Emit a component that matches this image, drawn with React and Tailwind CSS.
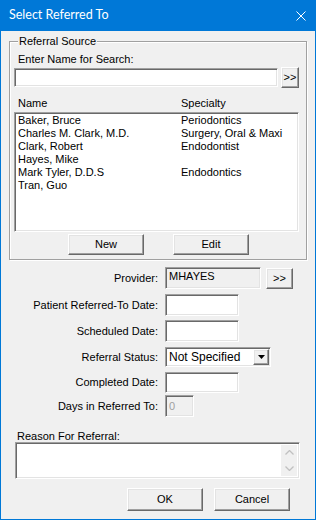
export default function App() {
  const raised =
    "bg-[#f0f0f0] border border-t-white border-l-white border-r-[#696969] border-b-[#696969] shadow-[inset_-1px_-1px_0_#a0a0a0,inset_1px_1px_0_#e3e3e3]";
  const sunken =
    "border border-t-[#a0a0a0] border-l-[#a0a0a0] border-r-white border-b-white shadow-[inset_1px_1px_0_#696969,inset_-1px_-1px_0_#e3e3e3]";
  const items = [
    ["Baker, Bruce", "Periodontics"],
    ["Charles M. Clark, M.D.", "Surgery, Oral & Maxi"],
    ["Clark, Robert", "Endodontist"],
    ["Hayes, Mike", ""],
    ["Mark Tyler, D.D.S", "Endodontics"],
    ["Tran, Guo", ""],
  ];
  const label = "w-[149px] text-right leading-[13px] shrink-0";
  return (
    <div className="w-[316px] h-[520px] bg-[#0078d7] px-[1px] pb-[1px] flex flex-col font-['Liberation_Sans',Arial,sans-serif] text-[11px] text-black">
      <div className="h-[31px] shrink-0 flex items-center justify-between pl-[8px] pr-[9px]">
        <span className="text-white text-[12.5px] font-['Lato',sans-serif] leading-none">Select Referred To</span>
        <svg width="10" height="10" viewBox="0 0 10 10" className="block">
          <path d="M0.5 0.5 L9.5 9.5 M9.5 0.5 L0.5 9.5" stroke="white" strokeWidth="1" />
        </svg>
      </div>
      <div className="flex-1 bg-[#f0f0f0] px-[8px] pt-[10px] pb-[8px] flex flex-col">
        {/* Group box */}
        <div className="relative h-[219px] border border-[#a0a0a0] shadow-[inset_1px_1px_0_#fff,1px_1px_0_#fff] pl-[4px] pr-[5px] pt-[11px] flex flex-col">
          <span className="absolute left-[8px] -top-[7px] px-[1px] bg-[#f0f0f0] leading-[13px]">Referral Source</span>
          <div className="leading-[13px] pl-[4px]">Enter Name for Search:</div>
          <div className="mt-[1px] h-[21px] flex items-center">
            <div className={`w-[264px] h-[19px] bg-white ${sunken}`}></div>
            <button className={`ml-[3px] w-[18px] h-[21px] flex items-center justify-center leading-none text-[11px] ${raised}`}>&gt;&gt;</button>
          </div>
          <div className="mt-[9px] h-[13px] leading-[13px] flex pl-[4px]">
            <span className="w-[163px]">Name</span>
            <span>Specialty</span>
          </div>
          <div className={`mt-[2px] h-[120px] w-[285px] bg-white ${sunken} pl-[3px] pt-[1px]`}>
            {items.map(([n, s]) => (
              <div key={n} className="flex h-[13px] leading-[13px]">
                <span className="w-[163px]">{n}</span>
                <span>{s}</span>
              </div>
            ))}
          </div>
          <div className="mt-[2px] flex pl-[54px] gap-[29px]">
            <button className={`w-[76px] h-[21px] flex items-center justify-center ${raised}`}>New</button>
            <button className={`w-[76px] h-[21px] flex items-center justify-center ${raised}`}>Edit</button>
          </div>
        </div>

        {/* Fields */}
        <div className="mt-[7px] h-[22px] flex items-center gap-[7px]">
          <span className={label}>Provider:</span>
          <div className={`w-[96px] h-[22px] bg-[#f0f0f0] ${sunken} pl-[3px] pt-[2px] leading-[13px]`}>MHAYES</div>
          <button className={`ml-[-2px] w-[27px] h-[21px] flex items-center justify-center text-[11px] leading-none ${raised}`}>&gt;&gt;</button>
        </div>
        <div className="mt-[5px] h-[22px] flex items-center gap-[7px]">
          <span className={label}>Patient Referred-To Date:</span>
          <div className={`w-[74px] h-[22px] bg-white ${sunken}`}></div>
        </div>
        <div className="mt-[4px] h-[22px] flex items-center gap-[7px]">
          <span className={label}>Scheduled Date:</span>
          <div className={`w-[74px] h-[22px] bg-white ${sunken}`}></div>
        </div>
        <div className="mt-[5px] h-[20px] flex items-center gap-[7px]">
          <span className={label}>Referral Status:</span>
          <div className={`w-[106px] h-[20px] bg-white ${sunken} flex items-center justify-between pl-[3px] pr-[1px]`}>
            <span className="leading-[13px] text-[12px]">Not Specified</span>
            <div className={`w-[16px] h-[16px] flex items-center justify-center ${raised}`}>
              <svg width="7" height="4" viewBox="0 0 7 4"><path d="M0 0 H7 L3.5 4 Z" fill="black" /></svg>
            </div>
          </div>
        </div>
        <div className="mt-[5px] h-[21px] flex items-center gap-[7px]">
          <span className={label}>Completed Date:</span>
          <div className={`w-[74px] h-[21px] bg-white ${sunken}`}></div>
        </div>
        <div className="mt-[2px] h-[22px] flex items-center gap-[7px]">
          <span className={label}>Days in Referred To:</span>
          <div className={`w-[29px] h-[22px] bg-[#f0f0f0] ${sunken} pl-[3px] flex items-center text-[#a0a0a0] leading-[13px]`}>0</div>
        </div>

        <div className="mt-[13px] h-[12px] leading-[12px] pl-[8px]">Reason For Referral:</div>
        <div className={`ml-[6px] w-[285px] h-[37px] bg-white ${sunken} flex justify-end p-[2px]`}>
          <div className="w-[16px] h-full bg-[#f0f0f0] flex flex-col items-center justify-between py-[5px]">
            <svg width="9" height="5" viewBox="0 0 9 5"><path d="M0.5 4.5 L4.5 0.5 L8.5 4.5" stroke="#c0c0c0" strokeWidth="1.3" fill="none" /></svg>
            <svg width="9" height="5" viewBox="0 0 9 5"><path d="M0.5 0.5 L4.5 4.5 L8.5 0.5" stroke="#c0c0c0" strokeWidth="1.3" fill="none" /></svg>
          </div>
        </div>
        <div className="mt-[9px] flex pl-[118px] gap-[11px]">
          <button className={`w-[76px] h-[23px] flex items-center justify-center ${raised}`}>OK</button>
          <button className={`w-[76px] h-[23px] flex items-center justify-center ${raised}`}>Cancel</button>
        </div>
      </div>
    </div>
  );
}
